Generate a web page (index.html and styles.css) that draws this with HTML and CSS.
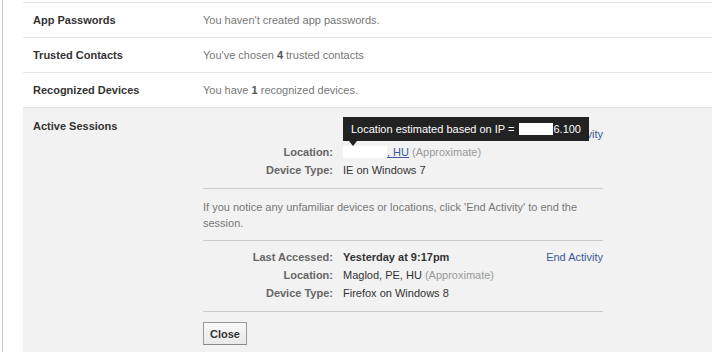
FILE: index.html
```html
<!DOCTYPE html>
<html lang="en">
  <head>
    <meta charset="UTF-8" />
    <title>Security Settings</title>
    <link rel="stylesheet" href="styles.css">
  </head>
  <body>
    <div id="wrap">
      <ul class="settings">
        <li class="row">
          <span class="row-label">App Passwords</span>
          <span class="row-value">You haven't created app passwords.</span>
        </li>
        <li class="row">
          <span class="row-label">Trusted Contacts</span>
          <span class="row-value">You've chosen <b>4</b> trusted contacts</span>
        </li>
        <li class="row">
          <span class="row-label">Recognized Devices</span>
          <span class="row-value">You have <b>1</b> recognized devices.</span>
        </li>
        <li class="row row-open">
          <span class="row-label">Active Sessions</span>
          <div class="sessions">
            <div class="session">
              <div class="tip">
                Location estimated based on IP = <span class="hide hide-ip"></span>6.100
              </div>
              <span class="s-label"></span>
              <span class="s-value"></span>
              <a class="end" href="#">End Activity</a>
              <span class="s-label">Location:</span>
              <span class="s-value"><span class="hide hide-city"></span><a class="loc" href="#">, HU</a> <span class="approx">(Approximate)</span></span>
              <span class="s-label">Device Type:</span>
              <span class="s-value">IE on Windows 7</span>
            </div>
            <p class="notice">If you notice any unfamiliar devices or locations, click 'End Activity' to end the session.</p>
            <div class="session">
              <span class="s-label">Last Accessed:</span>
              <span class="s-value"><b>Yesterday at 9:17pm</b></span>
              <a class="end" href="#">End Activity</a>
              <span class="s-label">Location:</span>
              <span class="s-value">Maglod, PE, HU <span class="approx">(Approximate)</span></span>
              <span class="s-label">Device Type:</span>
              <span class="s-value">Firefox on Windows 8</span>
            </div>
            <div class="actions">
              <button class="btn">Close</button>
            </div>
          </div>
        </li>
      </ul>
    </div>
  </body>
</html>
```

FILE: styles.css
```css
* {
  margin: 0;
  padding: 0;
  list-style: none;
  box-sizing: border-box;
  text-decoration: none;
}
body {
  font-family: "Liberation Sans", Arial, sans-serif;
  font-size: 11px;
  color: #333;
  background: #fff;
}
#wrap {
  margin-left: 2px;
  min-height: 352px;
  border-left: 1px solid #ccc;
  padding: 2px 0 0 20px;
}
.settings {
  border-top: 1px solid #e5e5e5;
}
.row {
  display: flex;
  border-bottom: 1px solid #e5e5e5;
  line-height: 14px;
  padding: 10px 0 10px 10px;
}
.row-label {
  width: 170px;
  flex: none;
  font-weight: bold;
  color: #333;
}
.row-value {
  color: #777;
}
.row-value b {
  color: #555;
}
.row-open {
  background: #f2f2f2;
  border-bottom: 0;
  padding-top: 11px;
  padding-bottom: 7px;
  min-height: 244px;
}
.sessions {
  width: 400px;
  padding-top: 6px;
}
.session {
  position: relative;
  display: grid;
  grid-template-columns: 130px 1fr auto;
  column-gap: 10px;
  line-height: 18px;
  padding: 0 0 9px;
  border-bottom: 1px solid #ccc;
}
.notice + .session {
  padding-top: 7px;
}
.s-label {
  grid-column: 1;
  text-align: right;
  font-weight: bold;
  color: #666;
}
.s-value {
  grid-column: 2;
  color: #333;
}
.end {
  grid-column: 3;
  grid-row: 1;
  color: #3b5998;
}
.approx {
  color: #999;
}
.loc {
  color: #3b5998;
  text-decoration: underline;
}
.hide {
  display: inline-block;
  background: #fff;
  vertical-align: -2px;
}
.hide-city {
  width: 44px;
  height: 12px;
}
.hide-ip {
  width: 34px;
  height: 12px;
  margin-left: 2px;
}
.notice {
  color: #777;
  line-height: 16px;
  padding: 10px 0 9px;
  border-bottom: 1px solid #ccc;
}
.actions {
  padding-top: 10px;
}
.btn {
  font-family: "Liberation Sans", Arial, sans-serif;
  font-size: 11px;
  font-weight: bold;
  color: #333;
  height: 23px;
  padding: 0 6px;
  background: linear-gradient(#f9f9f9, #e9e9e9);
  border: 1px solid #999;
  border-bottom-color: #888;
}
.tip {
  position: absolute;
  left: 140px;
  top: -8px;
  z-index: 2;
  height: 24px;
  line-height: 24px;
  padding: 0 8px;
  background: #222;
  color: #fff;
  white-space: nowrap;
}
.tip::after {
  content: "";
  position: absolute;
  left: 6px;
  bottom: -5px;
  border-top: 5px solid #222;
  border-left: 4px solid transparent;
  border-right: 4px solid transparent;
}
```
